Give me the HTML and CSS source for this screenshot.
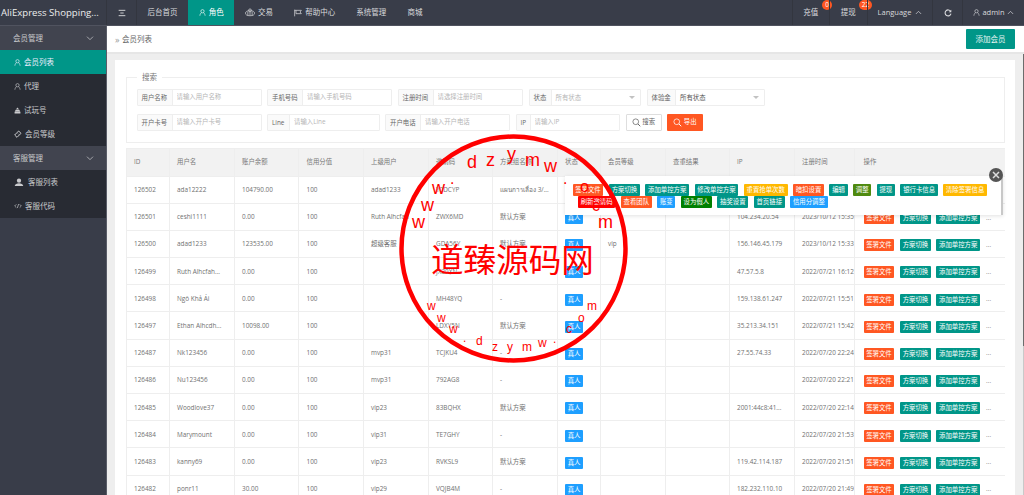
FILE: index.html
```html
<!DOCTYPE html>
<html lang="zh">
<head>
<meta charset="utf-8">
<title>会员列表</title>
<link rel="stylesheet" href="styles.css">
</head>
<body>
<svg class="defs" width="0" height="0" aria-hidden="true">
  <symbol id="i-user" viewBox="0 0 12 12"><circle cx="6" cy="3.8" r="2.8" fill="none" stroke="currentColor" stroke-width="1.1"/><path d="M1.5 11.5c.3-2.8 1.8-4.8 2.8-5.2M10.5 11.5c-.3-2.8-1.8-4.8-2.8-5.2" fill="none" stroke="currentColor" stroke-width="1.1"/></symbol>
  <symbol id="i-down" viewBox="0 0 12 12"><path d="M1.5 4l4.5 4.5L10.5 4" fill="none" stroke="currentColor" stroke-width="1.1"/></symbol>
  <symbol id="i-up" viewBox="0 0 12 12"><path d="M1.5 8.5L6 4l4.5 4.5" fill="none" stroke="currentColor" stroke-width="1.2"/></symbol>
  <symbol id="i-search" viewBox="0 0 12 12"><circle cx="5" cy="5" r="3.8" fill="none" stroke="currentColor" stroke-width="1"/><path d="M8 8l3 3" stroke="currentColor" stroke-width="1.3"/></symbol>
</svg>

<header class="topbar">
  <div class="brand">AliExpress Shopping...</div>
  <div class="nav-toggle"><svg class="ic8" viewBox="0 0 12 12"><path d="M1 2h10M3.5 6h5M1 10h10" stroke="currentColor" stroke-width="1.4"/></svg></div>
  <nav class="nav">
    <a class="nav-item">后台首页</a>
    <a class="nav-item active"><svg class="ic7"><use href="#i-user"/></svg>角色</a>
    <a class="nav-item"><svg class="ic10" viewBox="0 0 14 12"><ellipse cx="7" cy="7" rx="6.3" ry="3.5" fill="none" stroke="currentColor"/><circle cx="7" cy="3" r="2" fill="none" stroke="currentColor"/><path d="M4 5v5M7 5v5M10 5v5" stroke="currentColor"/></svg>交易</a>
    <a class="nav-item"><svg class="ic8" viewBox="0 0 12 12"><path d="M1 1v10M1 2h10l-2 2.5 2 2.5H3V2" fill="none" stroke="currentColor" stroke-width="1.1"/></svg>帮助中心</a>
    <a class="nav-item">系统管理</a>
    <a class="nav-item">商城</a>
  </nav>
  <div class="top-right">
    <a class="top-cell cell-pay">充值<span class="badge badge-a">0</span></a>
    <a class="top-cell cell-draw">提现<span class="badge badge-b">22</span></a>
    <a class="top-cell cell-lang">Language<svg class="ic7"><use href="#i-up"/></svg></a>
    <a class="top-cell cell-refresh"><svg class="ic8" viewBox="0 0 12 12"><path d="M10 3.5A4.5 4.5 0 1 0 10.5 7" fill="none" stroke="currentColor" stroke-width="1.6"/><path d="M11 1v4H7z" fill="currentColor"/></svg></a>
    <a class="top-cell cell-admin"><svg class="ic7"><use href="#i-user"/></svg>admin<svg class="ic7"><use href="#i-up"/></svg></a>
  </div>
</header>

<div class="layout">
  <aside class="sidebar">
    <div class="side-head"><span>会员管理</span><svg class="ic8"><use href="#i-down"/></svg></div>
    <ul class="side-list">
      <li class="side-item current"><svg class="ic7"><use href="#i-user"/></svg>会员列表</li>
      <li class="side-item"><svg class="ic7"><use href="#i-user"/></svg>代理</li>
      <li class="side-item"><svg class="ic7" viewBox="0 0 12 12"><path d="M6 1l2.5 3h-5zM3 4.500h6l2 3.500H1zM1 8.500h10V11H1z" fill="currentColor"/></svg>试玩号</li>
      <li class="side-item"><svg class="ic8" viewBox="0 0 12 12"><path d="M7 1.500l3.500 3.500-6 6L1 7.500zM6 5.500l1 1" fill="none" stroke="currentColor" stroke-width="1.500"/></svg>会员等级</li>
    </ul>
    <div class="side-head"><span>客服管理</span><svg class="ic8"><use href="#i-down"/></svg></div>
    <ul class="side-list">
      <li class="side-item kefu"><svg class="ic10" viewBox="0 0 14 12"><circle cx="7" cy="3.500" r="3" fill="currentColor"/><path d="M1 11c.5-3 3-4 6-4s5.500 1 6 4z" fill="currentColor"/></svg>客服列表</li>
      <li class="side-item"><svg class="ic8" viewBox="0 0 12 12"><path d="M3.500 3.500L1 6l2.500 2.500M8.500 3.500L11 6 8.500 8.500M7 3L5 9" fill="none" stroke="currentColor"/></svg>客服代码</li>
    </ul>
  </aside>

  <main class="main">
    <div class="crumbs">
      <div class="crumb"><span class="crumb-mark">»</span>会员列表</div>
      <button class="btn-add">添加会员</button>
    </div>
    <div class="page-wrap">
      <section class="card">
        <fieldset class="search">
          <legend>搜索</legend>
          <div class="field-row">
            <label class="field f125"><span>用户名称</span><input placeholder="请输入用户名称"></label>
            <label class="field f125"><span>手机号码</span><input placeholder="请输入手机号码"></label>
            <label class="field f125w"><span>注册时间</span><input placeholder="请选择注册时间"></label>
            <label class="field f112"><span class="short">状态</span><div class="select muted">所有状态<i class="caret"></i></div></label>
            <label class="field f118"><span class="mid">体验金</span><div class="select">所有状态<i class="caret"></i></div></label>
          </div>
          <div class="field-row">
            <label class="field f125"><span>开户卡号</span><input placeholder="请输入开户卡号"></label>
            <label class="field f112"><span class="short">Line</span><input placeholder="请输入Line"></label>
            <label class="field f125"><span>开户电话</span><input placeholder="请输入开户电话"></label>
            <label class="field f105"><span class="tiny">IP</span><input placeholder="请输入IP"></label>
            <button class="btn-search"><svg class="ic9"><use href="#i-search"/></svg>搜索</button>
            <button class="btn-export"><svg class="ic9"><use href="#i-search"/></svg>导出</button>
          </div>
        </fieldset>

        <table class="grid">
          <colgroup>
            <col class="c1"><col class="c2"><col class="c3"><col class="c4"><col class="c5"><col class="c6"><col class="c7"><col class="c8"><col class="c9"><col class="c10"><col class="c11"><col class="c12"><col class="c13">
          </colgroup>
          <thead>
            <tr><th>ID</th><th>用户名</th><th>账户余额</th><th>信用分值</th><th>上级用户</th><th>邀请码</th><th>方案组名称</th><th>状态</th><th>会员等级</th><th>查重结果</th><th>IP</th><th>注册时间</th><th class="ops">操作</th></tr>
          </thead>
          <tbody>
            <tr><td>126502</td><td>ada12222</td><td>104790.00</td><td>100</td><td>adad1233</td><td>Y0DCYP</td><td>แผนการเลื่อง 3/...</td><td><span class="tag blue">真人</span></td><td></td><td></td><td></td><td>2023/10/12 15:40</td><td class="ops"><div class="ops-in"><span class="tag orange">签署文件</span><span class="tag teal">方案切换</span><span class="tag teal">添加单控方案</span><span class="more">...</span></div></td></tr>
            <tr><td>126501</td><td>ceshi1111</td><td>0.00</td><td>100</td><td>Ruth Alhcfah</td><td>ZWX6MD</td><td>默认方案</td><td><span class="tag blue">真人</span></td><td></td><td></td><td>104.234.20.54</td><td>2023/10/12 15:35</td><td class="ops"><div class="ops-in"><span class="tag orange">签署文件</span><span class="tag teal">方案切换</span><span class="tag teal">添加单控方案</span><span class="more">...</span></div></td></tr>
            <tr><td>126500</td><td>adad1233</td><td>123535.00</td><td>100</td><td>超级客服</td><td>GDA56Y</td><td>默认方案</td><td><span class="tag blue">真人</span></td><td>vip</td><td></td><td>156.146.45.179</td><td>2023/10/12 15:33</td><td class="ops"><div class="ops-in"><span class="tag orange">签署文件</span><span class="tag teal">方案切换</span><span class="tag teal">添加单控方案</span><span class="more">...</span></div></td></tr>
            <tr><td>126499</td><td>Ruth Alhcfah...</td><td>0.00</td><td>100</td><td></td><td>JX30XN</td><td>-</td><td><span class="tag blue">真人</span></td><td></td><td></td><td>47.57.5.8</td><td>2022/07/21 16:12</td><td class="ops"><div class="ops-in"><span class="tag orange">签署文件</span><span class="tag teal">方案切换</span><span class="tag teal">添加单控方案</span><span class="more">...</span></div></td></tr>
            <tr><td>126498</td><td>Ngô Khả Ái</td><td>0.00</td><td>100</td><td></td><td>MH48YQ</td><td>-</td><td><span class="tag blue">真人</span></td><td></td><td></td><td>159.138.61.247</td><td>2022/07/21 15:51</td><td class="ops"><div class="ops-in"><span class="tag orange">签署文件</span><span class="tag teal">方案切换</span><span class="tag teal">添加单控方案</span><span class="more">...</span></div></td></tr>
            <tr><td>126497</td><td>Ethan Alhcdh...</td><td>10098.00</td><td>100</td><td></td><td>LDXY5N</td><td>默认方案</td><td><span class="tag blue">真人</span></td><td></td><td></td><td>35.213.34.151</td><td>2022/07/21 15:42</td><td class="ops"><div class="ops-in"><span class="tag orange">签署文件</span><span class="tag teal">方案切换</span><span class="tag teal">添加单控方案</span><span class="more">...</span></div></td></tr>
            <tr><td>126487</td><td>Nk123456</td><td>0.00</td><td>100</td><td>mvp31</td><td>TCJKU4</td><td>-</td><td><span class="tag blue">真人</span></td><td></td><td></td><td>27.55.74.33</td><td>2022/07/20 22:24</td><td class="ops"><div class="ops-in"><span class="tag orange">签署文件</span><span class="tag teal">方案切换</span><span class="tag teal">添加单控方案</span><span class="more">...</span></div></td></tr>
            <tr><td>126486</td><td>Nu123456</td><td>0.00</td><td>100</td><td>mvp31</td><td>792AG8</td><td>-</td><td><span class="tag blue">真人</span></td><td></td><td></td><td></td><td>2022/07/20 22:21</td><td class="ops"><div class="ops-in"><span class="tag orange">签署文件</span><span class="tag teal">方案切换</span><span class="tag teal">添加单控方案</span><span class="more">...</span></div></td></tr>
            <tr><td>126485</td><td>Woodlove37</td><td>0.00</td><td>100</td><td>vip23</td><td>83BQHX</td><td>默认方案</td><td><span class="tag blue">真人</span></td><td></td><td></td><td>2001:44c8:41...</td><td>2022/07/20 22:14</td><td class="ops"><div class="ops-in"><span class="tag orange">签署文件</span><span class="tag teal">方案切换</span><span class="tag teal">添加单控方案</span><span class="more">...</span></div></td></tr>
            <tr><td>126484</td><td>Marymount</td><td>0.00</td><td>100</td><td>vip31</td><td>TE7GHY</td><td>-</td><td><span class="tag blue">真人</span></td><td></td><td></td><td></td><td>2022/07/20 21:53</td><td class="ops"><div class="ops-in"><span class="tag orange">签署文件</span><span class="tag teal">方案切换</span><span class="tag teal">添加单控方案</span><span class="more">...</span></div></td></tr>
            <tr><td>126483</td><td>kanny69</td><td>0.00</td><td>100</td><td>vip23</td><td>RVKSL9</td><td>默认方案</td><td><span class="tag blue">真人</span></td><td></td><td></td><td>119.42.114.187</td><td>2022/07/20 21:51</td><td class="ops"><div class="ops-in"><span class="tag orange">签署文件</span><span class="tag teal">方案切换</span><span class="tag teal">添加单控方案</span><span class="more">...</span></div></td></tr>
            <tr><td>126482</td><td>ponr11</td><td>30.00</td><td>100</td><td>vip29</td><td>VQJB4M</td><td>-</td><td><span class="tag blue">真人</span></td><td></td><td></td><td>182.232.110.10</td><td>2022/07/20 21:49</td><td class="ops"><div class="ops-in"><span class="tag orange">签署文件</span><span class="tag teal">方案切换</span><span class="tag teal">添加单控方案</span><span class="more">...</span></div></td></tr>
          </tbody>
        </table>
      </section>
      <div class="scrollbar"><div class="thumb"></div></div>
    </div>
  </main>
</div>

<div class="popup">
  <div class="pop-row">
    <span class="tag orange">签署文件</span><span class="tag teal">方案切换</span><span class="tag teal">添加单控方案</span><span class="tag teal">修改单控方案</span><span class="tag yellow">重置抢单次数</span><span class="tag orange">暗扣设置</span><span class="tag teal">编辑</span><span class="tag olive">调整</span><span class="tag teal">提现</span><span class="tag teal">银行卡信息</span><span class="tag yellow">清除签署信息</span>
  </div>
  <div class="pop-row second">
    <span class="tag red">刷新邀请码</span><span class="tag orange">查看团队</span><span class="tag blue">账变</span><span class="tag green">设为假人</span><span class="tag teal">抽奖设置</span><span class="tag teal">首页链接</span><span class="tag blue">信用分调整</span>
  </div>
  <button class="pop-close" aria-label="关闭"><svg viewBox="0 0 12 12"><path d="M3 3l6 6M9 3l-6 6" stroke="currentColor" stroke-width="1.5"/></svg></button>
</div>

<svg class="stamp" viewBox="0 0 1024 495" aria-hidden="true">
  <circle class="ring" cx="513.5" cy="248.5" r="112"/>
  <text class="s-big" x="431" y="272">道臻源码网</text>
  <text class="s-lg" x="467" y="168">d</text>
  <text class="s-lg" x="486" y="166">z</text>
  <text class="s-lg" x="507" y="160">y</text>
  <text class="s-lg" x="525" y="166">m</text>
  <text class="s-lg" x="544" y="172">w</text>
  <text class="s-md" x="563" y="184">.</text>
  <text class="s-lg" x="432" y="194">w</text>
  <text class="s-md" x="450" y="184">.</text>
  <text class="s-lg" x="421" y="211">w</text>
  <text class="s-lg" x="412" y="228">w</text>
  <text class="s-lg" x="598" y="228">m</text>
  <text class="s-md" x="580" y="192">o</text>
  <text class="s-md" x="592" y="211">c</text>
  <text class="s-sm" x="427" y="310">w</text>
  <text class="s-sm" x="437" y="322">w</text>
  <text class="s-sm" x="449" y="333">w</text>
  <text class="s-sm" x="463" y="342">.</text>
  <text class="s-sm" x="476" y="345">d</text>
  <text class="s-sm" x="492" y="351">z</text>
  <text class="s-sm" x="507" y="351">y</text>
  <text class="s-sm" x="522" y="351">m</text>
  <text class="s-sm" x="538" y="347">w</text>
  <text class="s-sm" x="553" y="343">.</text>
  <text class="s-sm" x="566" y="333">c</text>
  <text class="s-sm" x="578" y="322">o</text>
  <text class="s-sm" x="587" y="310">m</text>
</svg>
</body>
</html>
```

FILE: styles.css
```css
* { box-sizing: border-box; }
html, body { margin: 0; height: 495px; overflow: hidden; }
body {
  position: relative;
  width: 1024px;
  background: #eeeeee;
  color: #666;
  font: 6.4px/1.4 "Open Sans", "Noto Sans CJK SC", sans-serif;
}
.defs { position: absolute; }
svg { display: block; flex: none; }
.ic7 { width: 7px; height: 7px; }
.ic8 { width: 8px; height: 8px; }
.ic9 { width: 9px; height: 9px; }
.ic10 { width: 10px; height: 9px; }

/* top bar */
.topbar {
  display: flex;
  height: 26px;
  background: #393d49;
  border-bottom: 1px solid #50535f;
  color: #d8d9dc;
  font-size: 7.5px;
}
.brand {
  width: 107px;
  padding-left: 1px;
  font-size: 9.6px;
  line-height: 25px;
  white-space: nowrap;
  color: #eceded;
  border-right: 1px solid #33363f;
}
.nav-toggle {
  width: 30px;
  display: flex;
  align-items: center;
  justify-content: center;
  border-right: 1px solid #33363f;
}
.nav { display: flex; }
.nav-item {
  display: flex;
  align-items: center;
  gap: 3px;
  padding: 0 10.6px;
  white-space: nowrap;
}
.nav-item.active { background: #009688; color: #fff; }
.top-right { display: flex; margin-left: auto; }
.top-cell {
  position: relative;
  display: flex;
  align-items: center;
  justify-content: center;
  gap: 3.5px;
  border-left: 1px solid #33363f;
  white-space: nowrap;
}
.cell-pay, .cell-draw { width: 37.5px; }
.cell-lang { width: 65.5px; }
.cell-refresh { width: 30px; }
.cell-admin { width: 62px; gap: 2.5px; }
.badge {
  position: absolute;
  top: 0;
  height: 10px;
  min-width: 10px;
  padding: 0 2.5px;
  border-radius: 5px;
  background: #ff5722;
  color: #fff;
  font-size: 6.4px;
  line-height: 10px;
  text-align: center;
}
.badge-a { left: 29.5px; }
.badge-b { left: 29px; width: 13px; padding: 0; }

/* layout */
.layout { display: flex; height: 469px; }
.sidebar {
  width: 107px;
  flex: none;
  background: #393d49;
  border-right: 1px solid #5a5d68;
  color: #c9cacd;
  font-size: 7.5px;
}
.side-head {
  display: flex;
  align-items: center;
  justify-content: space-between;
  height: 24px;
  padding: 0 12px 0 13px;
  background: #41444f;
}
.side-list { margin: 0; padding: 0; list-style: none; background: #282b33; }
.side-item {
  display: flex;
  align-items: center;
  gap: 3px;
  height: 24px;
  padding-left: 14px;
}
.side-item.current { background: #009688; color: #eef; }
.side-item.kefu { gap: 4px; }

.main { flex: 1; min-width: 0; display: flex; flex-direction: column; }
.crumbs {
  display: flex;
  align-items: center;
  justify-content: space-between;
  height: 28px;
  padding: 0 9px 0 8px;
  background: #fff;
  border-bottom: 2px solid #e6e6e6;
  font-size: 7.5px;
}
.crumb { display: flex; align-items: center; gap: 2.5px; color: #666; }
.crumb-mark { color: #999; font-size: 9px; line-height: 1; }
.btn-add {
  width: 49px;
  height: 20px;
  border: 0;
  border-radius: 1px;
  background: #009688;
  color: #e8f5f3;
  font: inherit;
  font-size: 7.5px;
}
.page-wrap {
  flex: 1;
  min-height: 0;
  display: flex;
  padding: 6px 0 0 8px;
  overflow: hidden;
}
.card {
  width: 900px;
  flex: none;
  padding: 0 10.5px;
  background: #fff;
}
.scrollbar { width: 1px; margin: -6px 0 0 8px; background: #c9c9c9; }
.thumb { height: 292px; background: #6c6c6c; }

/* search */
.search {
  height: 71px;
  margin: 12px 0 5px;
  padding: 0 0 0 10px;
  border: 1px solid #eee;
  min-width: 0;
}
.search legend {
  margin-left: .5px;
  padding: 0 5px;
  font-size: 7.5px;
  line-height: 10px;
  color: #777;
}
.field-row { display: flex; gap: 5.5px; height: 17px; margin: 0 0 8px; }
.search legend + .field-row { margin-top: 7px; }
.field {
  display: flex;
  height: 17px;
  border: 1px solid #eee;
  background: #fff;
  border-radius: 1px;
}
.field > span {
  width: 35px;
  flex: none;
  padding-left: 4px;
  background: #fafafa;
  border-right: 1px solid #eee;
  line-height: 15px;
  white-space: nowrap;
}
.field > span.short { width: 22px; }
.field > span.mid { width: 28.5px; }
.field > span.tiny { width: 14px; }
.field input {
  flex: 1;
  min-width: 0;
  border: 0;
  padding: 0 4px;
  background: transparent;
  font: inherit;
  outline: 0;
}
.field input::placeholder { color: #b5b5b5; opacity: 1; }
.f125 { width: 125px; }
.f125w { width: 125.5px; }
.f112 { width: 112.5px; }
.f118 { width: 118.5px; }
.f105 { width: 104.5px; }
.select {
  position: relative;
  flex: 1;
  padding-left: 4px;
  line-height: 15px;
  color: #555;
}
.select.muted { color: #b5b5b5; }
.caret {
  position: absolute;
  top: 6px;
  right: 5px;
  border: 3px solid transparent;
  border-top: 3px solid #c2c2c2;
  border-bottom: 0;
}
.btn-search, .btn-export {
  display: flex;
  align-items: center;
  justify-content: center;
  gap: 1.5px;
  width: 36px;
  height: 17px;
  padding: 0;
  font: inherit;
  border-radius: 1px;
}
.btn-search { background: #fff; border: 1px solid #dedede; color: #666; }
.btn-export { background: #ff5722; border: 0; color: #fff; }

/* table */
.grid {
  table-layout: fixed;
  width: 879px;
  border-collapse: collapse;
  background: #fff;
}
.c1 { width: 43px; }
.c2 { width: 65px; }
.c3 { width: 64.5px; }
.c4 { width: 64.5px; }
.c5 { width: 65px; }
.c6 { width: 64px; }
.c7 { width: 65px; }
.c8 { width: 43px; }
.c9 { width: 65px; }
.c10 { width: 64px; }
.c11 { width: 65px; }
.c12 { width: 60.5px; }
.c13 { width: 150.5px; }
.grid th, .grid td {
  padding: 0 0 0 7.5px;
  border: 1px solid #eeeeee;
  overflow: hidden;
  white-space: nowrap;
  text-align: left;
  font-weight: 400;
}
.grid th { height: 27.5px; padding-top: 1px; background: #f2f2f2; color: #777; }
.grid td { height: 27.2px; padding-top: 2px; color: #707070; }
.grid .ops { padding-left: 8.5px; box-shadow: -2px 0 3px rgba(0, 0, 0, .07); border-right: 0; }
.ops-in { display: flex; align-items: center; gap: 5.5px; padding-top: .5px; }
.more { color: #888; margin-left: .5px; }
.tag {
  display: inline-block;
  flex: none;
  height: 12px;
  padding: 0 2.7px;
  border-radius: 1px;
  color: #fff;
  font-size: 6.4px;
  line-height: 12px;
  white-space: nowrap;
}
.grid td .tag.blue { margin-top: .5px; }
.orange { background: #ff5722; }
.teal { background: #009688; }
.blue { background: #1e9fff; }
.yellow { background: #ffb800; }
.olive { background: #4f8a10; }
.green { background: #008000; }
.red { background: #ff0000; }

/* pop-over of more actions */
.popup {
  position: absolute;
  left: 565px;
  top: 176px;
  width: 438px;
  height: 39px;
  padding: 8px 0 0 7.5px;
  background: #fff;
  border-right: 2px solid #c8c8c8;
  box-shadow: 0 1px 4px rgba(0, 0, 0, .12);
}
.pop-row { display: flex; gap: 5.5px; }
.pop-row .tag { height: 11.5px; line-height: 11.5px; }
.pop-row.second { margin-left: 5.5px; margin-top: .5px; }
.pop-close {
  position: absolute;
  top: -8px;
  right: -2px;
  width: 14px;
  height: 14px;
  padding: 1px;
  border: 0;
  border-radius: 50%;
  background: #555;
  color: #ddd;
}

/* stamp overlay */
.stamp {
  position: absolute;
  left: 0;
  top: 0;
  width: 1024px;
  height: 495px;
  pointer-events: none;
}
.ring { fill: none; stroke: #f00; stroke-width: 4.5; }
.stamp text { fill: #f00; font-family: "Liberation Sans", sans-serif; }
.stamp .s-big { font-family: "Noto Sans CJK SC", sans-serif; font-size: 32.6px; }
.s-lg { font-size: 18px; }
.s-md { font-size: 16px; }
.s-sm { font-size: 12px; }
```
